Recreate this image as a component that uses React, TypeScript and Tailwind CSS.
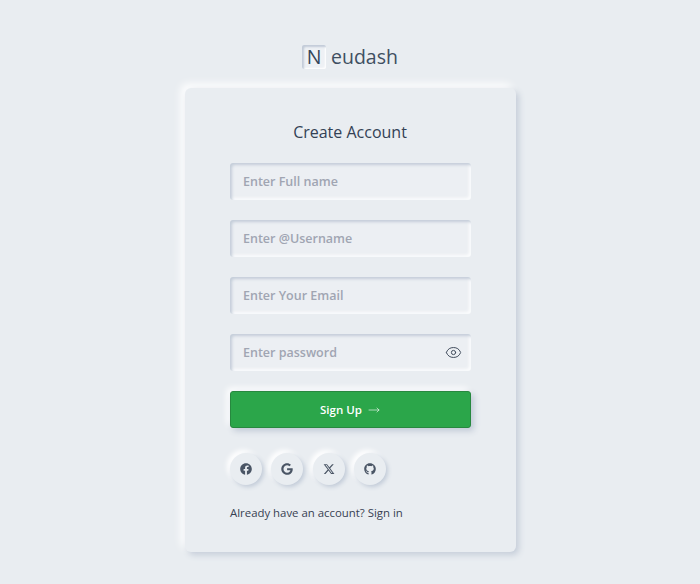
import { Eye, MoveRight } from "lucide-react";
import { FaFacebook, FaGoogle, FaGithub } from "react-icons/fa";
import { FaXTwitter } from "react-icons/fa6";

const fields = ["Enter Full name", "Enter @Username", "Enter Your Email"];

function Field({ label, children }: { label: string; children?: React.ReactNode }) {
  return (
    <div className="flex h-[37px] items-center justify-between rounded-[3px] bg-[#eceff3] pl-[13.5px] pr-[9px] text-[12.5px] font-semibold text-[#a0a5b2] shadow-[inset_2px_2px_3px_#c4cdd9,inset_-2px_-2px_3px_#fbfcfd]">
      <span className="pt-[2px]">{label}</span>
      {children}
    </div>
  );
}

const socials = [FaFacebook, FaGoogle, FaXTwitter, FaGithub];

export default function App() {
  return (
    <div className="flex min-h-[584px] flex-col items-center bg-[#e9edf1] pt-[45px] font-['Open_Sans',sans-serif]">
      <div className="flex h-6 items-center text-[19.5px] font-medium text-[#3f4f61]">
        <span className="mr-[5px] flex h-6 w-6 items-center justify-center rounded-[2px] bg-[#eef1f5] text-[#34465a] shadow-[inset_2px_2px_2px_#c2cbd8,inset_-1px_-1px_2px_#ffffff]">
          N
        </span>
        eudash
      </div>

      <div className="mt-[19px] h-[464px] w-[331px] rounded-[6px] bg-[#e9edf1] px-[45px] pt-[32px] shadow-[3px_3px_6px_#c5cdd9,-4px_-4px_8px_#ffffff]">
        <h1 className="text-center text-[16px] font-medium leading-[24px] text-[#334155]">Create Account</h1>

        <div className="mt-[19px] flex flex-col gap-5">
          {fields.map((f) => (
            <Field key={f} label={f} />
          ))}
          <Field label="Enter password">
            <Eye size={17} strokeWidth={1.4} className="text-[#3f4a5a]" />
          </Field>
        </div>

        <button className="mt-5 flex h-[37px] w-full items-center justify-center gap-[6px] rounded-[3px] border border-[#27883f] bg-[#2ba64a] text-[11.5px] font-semibold text-white shadow-[3px_3px_6px_#c0c9d6,-3px_-3px_6px_#ffffff]">
          Sign Up
          <MoveRight size={12} strokeWidth={1.2} />
        </button>

        <div className="mt-[25px] flex gap-[9.5px]">
          {socials.map((Icon, i) => (
            <div
              key={i}
              className="flex h-8 w-8 items-center justify-center rounded-full bg-[#e9edf1] text-[#4a5565] shadow-[2px_2px_4px_#c2cbd8,-3px_-3px_5px_#ffffff]"
            >
              <Icon size={12} />
            </div>
          ))}
        </div>

        <p className="mt-[19px] pl-[0.5px] text-[11.4px] font-medium leading-[18px] text-[#374151]">
          Already have an account? Sign in
        </p>
      </div>
    </div>
  );
}
